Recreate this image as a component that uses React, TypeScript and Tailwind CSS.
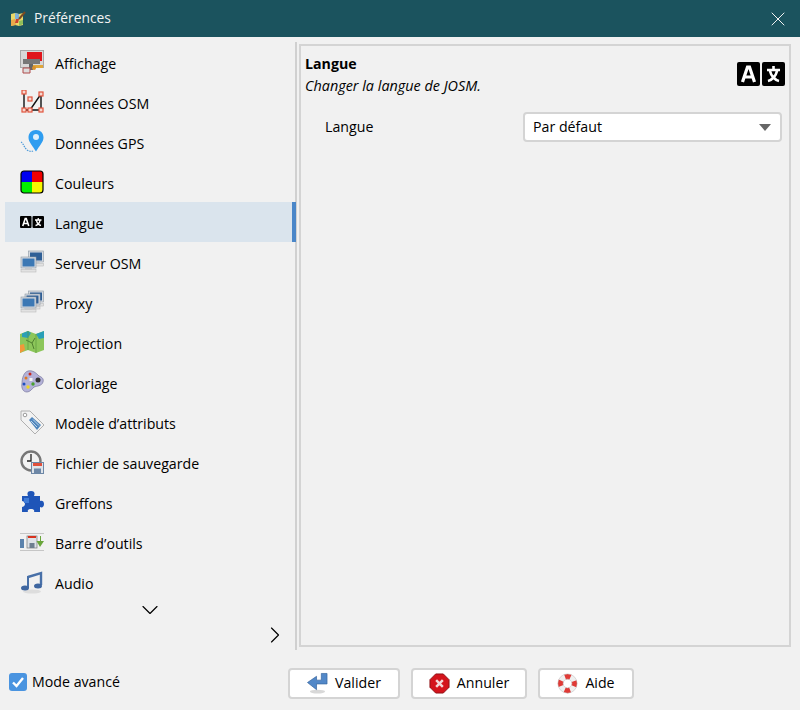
import type { ReactNode } from 'react';
import { ChevronDown, ChevronRight, X } from 'lucide-react';

function AppIcon() {
  return (
    <svg width="16" height="16" viewBox="0 0 16 16">
      <path d="M1 3l4-1 4 1 4-1v12l-4 1-4-1-4 1z" fill="#e8d76a" />
      <path d="M5 2l4 1v6l-4-1z" fill="#7fb0d8" />
      <path d="M1 9l4-1 1 6-5 1z" fill="#e9a94a" />
      <path d="M9 10l4-1v4l-4 2z" fill="#8fbf5a" />
      <path d="M15 1l-6 7" stroke="#7a4a22" strokeWidth="2" />
      <path d="M6 8l3 0-1 4-3 0z" fill="#c9402e" />
    </svg>
  );
}

function AffichageIcon() {
  return (
    <svg width="24" height="24" viewBox="0 0 24 24">
      <rect x="0.500" y="0.500" width="23" height="17" fill="#d8d8d8" stroke="#a8a8a8" />
      <rect x="7" y="2" width="15" height="9" fill="#e0161c" />
      <rect x="3" y="9" width="17" height="5" fill="#777" />
      <rect x="12" y="15" width="11" height="3" fill="#e0a63a" />
      <rect x="9" y="14" width="4" height="6" fill="#666" />
      <path d="M3 18h7v5H3z" fill="#ddd" stroke="#b04a4a" />
      <circle cx="14" cy="18" r="2" fill="#d9912e" />
    </svg>
  );
}

function OsmIcon() {
  return (
    <svg width="24" height="24" viewBox="0 0 24 24">
      <path d="M4 2v18h17V4L10 20" fill="none" stroke="#111" strokeWidth="1.4" />
      {[[4, 2], [21, 4], [10, 9], [4, 20], [10, 20], [21, 20]].map(([x, y]) => (
        <rect key={`${x}-${y}`} x={x - 2} y={y - 2} width="4" height="4" fill="#f6d8d0" stroke="#e2543c" strokeWidth="1.2" />
      ))}
    </svg>
  );
}

function GpsIcon() {
  return (
    <svg width="24" height="24" viewBox="0 0 24 24">
      <path d="M1 12c2 1 3 5 6 8 2 1 4 2 6 1" fill="none" stroke="#4a98d8" strokeWidth="1.2" strokeDasharray="1.5 1" />
      <path d="M16 0c-4.500 0-7.500 3-7.500 7.500 0 4.500 4.500 9 7.500 14 3-5 7.500-9.500 7.500-14C23.500 3 20.500 0 16 0z" fill="#2f9df0" />
      <circle cx="16" cy="7" r="3" fill="#dff0fc" />
    </svg>
  );
}

function ColorsIcon() {
  return (
    <svg width="24" height="24" viewBox="0 0 24 24">
      <path d="M12 1H4a3 3 0 0 0-3 3v8h11z" fill="#0000f0" />
      <path d="M12 1h8a3 3 0 0 1 3 3v8H12z" fill="#f00000" />
      <path d="M12 12H1v8a3 3 0 0 0 3 3h8z" fill="#00f000" />
      <path d="M12 12h11v8a3 3 0 0 1-3 3h-8z" fill="#f8f800" />
      <rect x="1" y="1" width="22" height="22" rx="3" fill="none" stroke="#000" strokeWidth="1.2" />
    </svg>
  );
}

function LanguageIcon({ size }: { size: number }) {
  return (
    <svg width={size} height={size / 2} viewBox="0 0 48 24">
      <rect x="0" y="0" width="23" height="24" rx="2" fill="#000" />
      <rect x="25" y="0" width="23" height="24" rx="2" fill="#000" />
      <path d="M5.500 20l5-15h2l5 15M8 15h7" fill="none" stroke="#fff" strokeWidth="3.200" />
      <path d="M36.500 4v3M30 8h13M33 9c1 5 5 9 9 10M40 9c-1 5-5 9-9 10" fill="none" stroke="#fff" strokeWidth="2.600" />
    </svg>
  );
}

function Computer({ x, y, dark }: { x: number; y: number; dark?: boolean }) {
  return (
    <g transform={`translate(${x} ${y})`}>
      <rect x="0" y="0" width="15" height="11" fill="#d6dbe0" stroke="#8d98a3" strokeWidth="0.6" />
      <rect x="1.500" y="1.500" width="12" height="8" fill={dark ? '#2f5f96' : '#3c78b4'} />
      <rect x="4" y="11" width="7" height="1.500" fill="#c4c8cc" />
      <rect x="0" y="12.500" width="15" height="2.500" fill="#e2e2e2" stroke="#b4b4b4" strokeWidth="0.5" />
    </g>
  );
}

function ServerIcon() {
  return (
    <svg width="24" height="24" viewBox="0 0 24 24">
      <Computer x={8.500} y={1} dark />
      <Computer x={1} y={7} />
    </svg>
  );
}

function ProxyIcon() {
  return (
    <svg width="24" height="24" viewBox="0 0 24 24">
      <Computer x={8.500} y={1} dark />
      <Computer x={5} y={4} dark />
      <Computer x={1} y={7} />
    </svg>
  );
}

function ProjectionIcon() {
  return (
    <svg width="24" height="24" viewBox="0 0 24 24">
      <path d="M0 4l8-3 8 3 8-3v19l-8 3-8-3-8 3z" fill="#8cc65a" />
      <path d="M2 3.500l6-2.500 3 2-3 5-6-1zM16 4l8-3v7l-5 1z" fill="#2a9fb8" />
      <path d="M0 15l4-1 1 6-5 3z" fill="#f0983a" />
      <path d="M8 1v19M16 4v19" stroke="#5d9a3c" strokeWidth="0.7" />
      <path d="M6 10l6 3 3-5M12 13l2 6" stroke="#4f7f30" strokeWidth="1" fill="none" />
    </svg>
  );
}

function PaletteIcon() {
  return (
    <svg width="24" height="24" viewBox="0 0 24 24">
      <path d="M8 1c5-1 8 2 11 5 3 1 5 3 4 6-1 4-6 4-9 5-2 2-4 5-7 5-4 0-6-4-5-9 0-5 2-11 6-12z" fill="#b4b2d8" stroke="#77769c" strokeWidth="0.7" />
      <circle cx="10" cy="4" r="1.500" fill="#c8281e" />
      <circle cx="6" cy="8" r="1.500" fill="#e0781e" />
      <circle cx="18" cy="10" r="2.500" fill="#333" />
      <rect x="9.500" y="8" width="3" height="3" fill="#f4f4f4" />
      <circle cx="4" cy="14" r="1.500" fill="#2050c0" />
      <circle cx="8" cy="17" r="1.700" fill="#f0d820" />
      <circle cx="13" cy="14" r="1.700" fill="#48a030" />
    </svg>
  );
}

function TagIcon() {
  return (
    <svg width="24" height="24" viewBox="0 0 24 24">
      <path d="M1 1h9l14 14-9 9L1 10z" fill="#f2f2f2" stroke="#b0b0b0" />
      <circle cx="5" cy="5" r="1.800" fill="#fff" stroke="#999" />
      <path d="M9 10l3-3 9 8-4 5z" fill="#4f86bd" />
      <path d="M11 11l6 6M13 9.500l6 6" stroke="#dbe7f2" strokeWidth="0.8" />
    </svg>
  );
}

function BackupIcon() {
  return (
    <svg width="24" height="24" viewBox="0 0 24 24">
      <circle cx="11" cy="11" r="9.500" fill="#f2f2f2" stroke="#777" strokeWidth="2.400" />
      <path d="M11 4v7H7" fill="none" stroke="#222" strokeWidth="1.300" />
      <rect x="11.500" y="12.500" width="12" height="11" fill="#dfe4ea" stroke="#6d87a6" />
      <rect x="13" y="13" width="9" height="3" fill="#e0503c" />
      <rect x="14" y="18.500" width="7" height="5" fill="#6d87a6" />
    </svg>
  );
}

function PluginIcon() {
  return (
    <svg width="24" height="24" viewBox="0 0 24 24">
      <path d="M2 6h6C7 4 7 1 11 1s4 3 3 5h6v5c2-1 4 0 4 3s-2 4-4 3v5h-6c1-2-1-3-3-3s-4 1-3 3H2v-5c1 0 3-1 3-3s-2-3-3-3z" fill="#1f55b8" />
      <path d="M4 8h5v5H4z" fill="#3f7bd8" />
    </svg>
  );
}

function ToolbarIcon() {
  return (
    <svg width="24" height="24" viewBox="0 0 24 24">
      <path d="M0 3.500h24M0 20.500h24" stroke="#bbb" strokeWidth="0.8" />
      <rect x="0" y="9" width="4" height="9" fill="#5b82ac" />
      <rect x="7" y="6" width="10" height="12" fill="#dfe3e8" stroke="#777" strokeWidth="0.7" />
      <rect x="8" y="6" width="8" height="2" fill="#d8321e" />
      <rect x="9.500" y="13" width="5" height="5" fill="#6f7f90" />
      <path d="M20 6v5h3l-4 6-3.500-6H19V6z" fill="#6aa63c" transform="translate(1 0)" />
    </svg>
  );
}

function AudioIcon() {
  return (
    <svg width="24" height="24" viewBox="0 0 24 24">
      <ellipse cx="12" cy="21.500" rx="9" ry="2" fill="#ddd" />
      <path d="M8 7l13-4v12" fill="none" stroke="#4870a8" strokeWidth="2.400" />
      <path d="M8 6v12" stroke="#4870a8" strokeWidth="2" />
      <ellipse cx="5" cy="18" rx="4" ry="2.500" fill="#3f66a0" />
      <ellipse cx="18" cy="16" rx="4" ry="2.500" fill="#3f66a0" />
    </svg>
  );
}

function OkIcon() {
  return (
    <svg width="21" height="24" viewBox="0 0 22 24">
      <ellipse cx="11" cy="21" rx="8" ry="2" fill="#d8d8d8" />
      <path d="M21 2v11H10v6L0.500 11.500 10 5v4h5V2z" fill="#5288c8" stroke="#34639c" strokeWidth="0.7" />
    </svg>
  );
}

function CancelIcon() {
  return (
    <svg width="21" height="21" viewBox="0 0 22 22">
      <path d="M7 1h8l6 6v8l-6 6H7l-6-6V7z" fill="#d4141c" stroke="#8e1015" />
      <path d="M7.500 7.500l7 7M14.500 7.500l-7 7" stroke="#f4d8d8" strokeWidth="2.600" />
    </svg>
  );
}

function HelpIcon() {
  return (
    <svg width="21" height="21" viewBox="0 0 24 24">
      <circle cx="12" cy="12" r="8" fill="none" stroke="#f0f0f0" strokeWidth="6" />
      <circle cx="12" cy="12" r="8" fill="none" stroke="#e03a36" strokeWidth="6" strokeDasharray="6.300 6.270" strokeDashoffset="3.100" />
      <circle cx="12" cy="12" r="11" fill="none" stroke="#bbb" strokeWidth="0.6" />
      <circle cx="12" cy="12" r="5" fill="none" stroke="#bbb" strokeWidth="0.6" />
    </svg>
  );
}

const items: { label: string; icon: ReactNode; active?: boolean }[] = [
  { label: 'Affichage', icon: <AffichageIcon /> },
  { label: 'Données OSM', icon: <OsmIcon /> },
  { label: 'Données GPS', icon: <GpsIcon /> },
  { label: 'Couleurs', icon: <ColorsIcon /> },
  { label: 'Langue', icon: <LanguageIcon size={24} />, active: true },
  { label: 'Serveur OSM', icon: <ServerIcon /> },
  { label: 'Proxy', icon: <ProxyIcon /> },
  { label: 'Projection', icon: <ProjectionIcon /> },
  { label: 'Coloriage', icon: <PaletteIcon /> },
  { label: 'Modèle d’attributs', icon: <TagIcon /> },
  { label: 'Fichier de sauvegarde', icon: <BackupIcon /> },
  { label: 'Greffons', icon: <PluginIcon /> },
  { label: 'Barre d’outils', icon: <ToolbarIcon /> },
  { label: 'Audio', icon: <AudioIcon /> },
];

function FooterButton({ width, icon, children }: { width: string; icon: ReactNode; children: ReactNode }) {
  return (
    <button className={`${width} h-[31px] flex items-center justify-center gap-[7px] bg-white border-2 border-[#d4d4d4] rounded-[4px]`}>
      {icon}
      <span>{children}</span>
    </button>
  );
}

export default function App() {
  return (
    <div className="w-[800px] h-[710px] flex flex-col bg-[#f1f1f1] text-[14.2px] text-black overflow-hidden font-['Open_Sans','Noto_Sans',sans-serif]">
      <div className="h-[37px] shrink-0 flex items-center justify-between pl-[10px] pr-[10px] bg-[#1b535e] text-[#f2f2f2]">
        <div className="flex items-center gap-[8px]">
          <AppIcon />
          <span className="text-[13.8px]">Préférences</span>
        </div>
        <X size={24} strokeWidth={1} />
      </div>

      <div className="h-[613px] flex">
        <div className="w-[297px] flex flex-col items-stretch pl-[5px] border-r-2 border-[#d0d0d0] mt-[5px]">
          {items.map((item) => (
            <div
              key={item.label}
              className={`h-[40px] shrink-0 flex items-center gap-[11px] pl-[15px] -mr-[1px] ${item.active ? 'bg-[#dae4ed] border-r-4 border-[#4a86c8]' : ''}`}
            >
              <span className="w-[24px] h-[24px] flex items-center justify-center shrink-0">{item.icon}</span>
              <span className="pt-[3px]">{item.label}</span>
            </div>
          ))}
          <div className="flex justify-center h-[16px] items-center">
            <ChevronDown size={28} strokeWidth={1} />
          </div>
          <div className="flex justify-end pr-[6px] mt-[3px]">
            <ChevronRight size={28} strokeWidth={1} />
          </div>
        </div>

        <div className="flex-1 mt-[7px] ml-[2px] mr-[9px] mb-[3px] border-2 border-[#d4d4d4] pl-[4px] pr-[7px] pt-[7px] flex flex-col">
          <div className="flex items-start justify-between">
            <div>
              <div className="font-bold leading-[22px]">Langue</div>
              <div className="italic text-[14.4px] leading-[22px]">Changer la langue de JOSM.</div>
            </div>
            <div className="pt-[9px] -mr-[3px]">
              <LanguageIcon size={48} />
            </div>
          </div>
          <div className="flex items-center justify-between mt-[15px] pl-[20px]">
            <span>Langue</span>
            <div className="w-[259px] h-[30px] flex items-center justify-between pl-[8px] pr-[9px] bg-white border-2 border-[#d4d4d4] rounded-[4px]">
              <span>Par défaut</span>
              <svg width="12" height="7" viewBox="0 0 12 7">
                <path d="M0 0h12L6 7z" fill="#666" />
              </svg>
            </div>
          </div>
        </div>
      </div>

      <div className="flex-1 flex items-center pl-[9px] pt-[4px]">
        <div className="w-[279px] flex items-center gap-[5px]">
          <span className="w-[18px] h-[18px] flex items-center justify-center rounded-[3px] bg-[#4a94e0]">
            <svg width="14" height="14" viewBox="0 0 14 14">
              <path d="M2 7.500l3.500 3.500L12 3" fill="none" stroke="#fff" strokeWidth="2.400" />
            </svg>
          </span>
          <span>Mode avancé</span>
        </div>
        <div className="flex items-center gap-[11px] pt-[2px]">
          <FooterButton width="w-[112px]" icon={<OkIcon />}>Valider</FooterButton>
          <FooterButton width="w-[116px]" icon={<CancelIcon />}>Annuler</FooterButton>
          <FooterButton width="w-[96px]" icon={<HelpIcon />}>Aide</FooterButton>
        </div>
      </div>
    </div>
  );
}
